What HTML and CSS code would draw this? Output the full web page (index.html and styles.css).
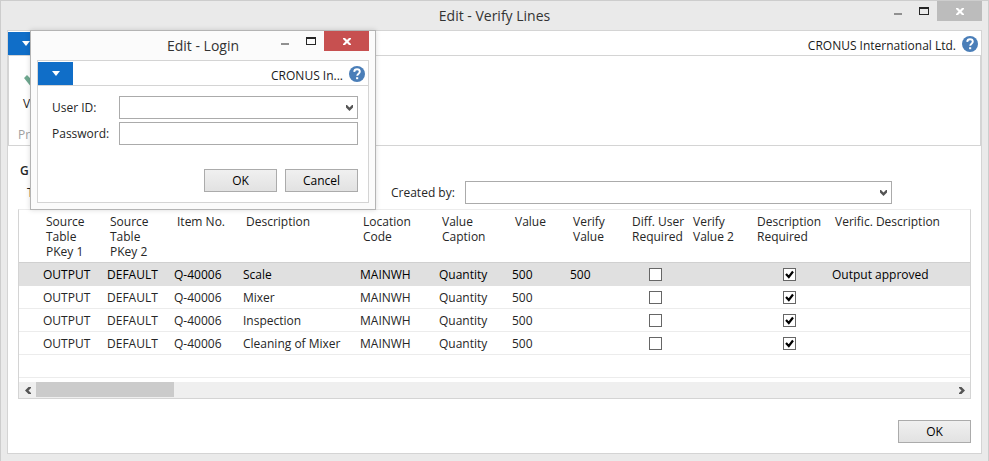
FILE: index.html
```html
<!DOCTYPE html>
<html lang="en">
<head>
<meta charset="utf-8">
<title>Edit - Verify Lines</title>
<link rel="stylesheet" href="styles.css">
</head>
<body>
<svg class="defs" aria-hidden="true">
  <symbol id="i-min" viewBox="0 0 8 2"><path d="M0 0h8v2H0z" fill="currentColor"/></symbol>
  <symbol id="i-max" viewBox="0 0 10 8"><path fill-rule="evenodd" d="M0 0h10v8H0zM1 2v5h8V2z" fill="currentColor"/></symbol>
  <symbol id="i-close" viewBox="0 0 8 7"><path d="M0 0h2l2 2 2-2h2v1L5.500 3.500 8 6v1H6L4 5 2 7H0V6l2.500-2.500L0 1z" fill="currentColor"/></symbol>
  <symbol id="i-help" viewBox="0 0 16 16"><circle cx="8" cy="8" r="8" fill="#4a7eb8"/><path d="M5.200 5.900C5.300 4.100 6.500 3.300 8 3.300s2.800.9 2.800 2.400c0 1.900-2.600 2.100-2.600 4.100" fill="none" stroke="#fff" stroke-width="1.900"/><path d="M7.100 11.200h2.100v2H7.100z" fill="#fff"/></symbol>
  <symbol id="i-down" viewBox="0 0 7 6"><path d="M0 0h1l2.500 2.500L6 0h1v2.500L3.500 6 0 2.500z" fill="currentColor"/></symbol>
  <symbol id="i-left" viewBox="0 0 6 7"><path d="M6 0v1L3.500 3.500 6 6v1H3.500L0 3.500 3.500 0z" fill="currentColor"/></symbol>
  <symbol id="i-right" viewBox="0 0 6 7"><path d="M0 0v1l2.500 2.500L0 6v1h2.500L6 3.500 2.500 0z" fill="currentColor"/></symbol>
  <symbol id="i-tri" viewBox="0 0 8 5"><path d="M0 0h8L4 5z" fill="#fff"/></symbol>
</svg>

<main class="window">
  <header class="titlebar">
    <h1>Edit - Verify Lines</h1>
    <div class="controls">
      <button class="minimize" aria-label="Minimize"><svg width="8" height="2"><use href="#i-min"/></svg></button>
      <button class="maximize" aria-label="Maximize"><svg width="10" height="8"><use href="#i-max"/></svg></button>
      <button class="close" aria-label="Close"><svg width="8" height="7"><use href="#i-close"/></svg></button>
    </div>
  </header>
  <div class="client">
    <div class="appbar">
      <button class="app-tab" aria-label="Application menu"><svg width="8" height="5"><use href="#i-tri"/></svg></button>
      <span class="company">CRONUS International Ltd.</span>
      <a class="help" href="#" aria-label="Help"><svg width="16" height="16"><use href="#i-help"/></svg></a>
    </div>
    <div class="ribbon">
      <button class="action"><svg width="20" height="16" viewBox="0 0 20 16"><path d="M1 5l3-3 5 5 7-7 3 2-10 13z" fill="#6fa890"/></svg>V</button>
      <span class="group">Pr</span>
    </div>
    <section class="general">
      <h2>G</h2>
      <div class="filters">
        <span class="type">T</span>
        <label for="created">Created by:</label>
        <span class="combo"><select id="created"><option></option></select><svg width="7" height="6"><use href="#i-down"/></svg></span>
      </div>
    </section>
    <div class="grid">
      <table>
        <colgroup><col class="w20"><col class="w64"><col class="w67"><col class="w69"><col class="w117"><col class="w79"><col class="w73"><col class="w58"><col class="w59"><col class="w61"><col class="w64"><col class="w78"><col></colgroup>
        <thead><tr><td></td><th>Source<br>Table<br>PKey 1</th><th>Source<br>Table<br>PKey 2</th><th>Item No.</th><th>Description</th><th>Location<br>Code</th><th>Value<br>Caption</th><th>Value</th><th>Verify<br>Value</th><th>Diff. User<br>Required</th><th>Verify<br>Value 2</th><th>Description<br>Required</th><th>Verific. Description</th></tr></thead>
        <tbody>
          <tr class="selected"><td></td><td>OUTPUT</td><td>DEFAULT</td><td>Q-40006</td><td>Scale</td><td>MAINWH</td><td>Quantity</td><td>500</td><td>500</td><td class="check"><input type="checkbox" aria-label="Diff. user required"></td><td></td><td class="check"><input type="checkbox" checked aria-label="Description required"></td><td>Output approved</td></tr>
          <tr><td></td><td>OUTPUT</td><td>DEFAULT</td><td>Q-40006</td><td>Mixer</td><td>MAINWH</td><td>Quantity</td><td>500</td><td></td><td class="check"><input type="checkbox" aria-label="Diff. user required"></td><td></td><td class="check"><input type="checkbox" checked aria-label="Description required"></td><td></td></tr>
          <tr><td></td><td>OUTPUT</td><td>DEFAULT</td><td>Q-40006</td><td>Inspection</td><td>MAINWH</td><td>Quantity</td><td>500</td><td></td><td class="check"><input type="checkbox" aria-label="Diff. user required"></td><td></td><td class="check"><input type="checkbox" checked aria-label="Description required"></td><td></td></tr>
          <tr><td></td><td>OUTPUT</td><td>DEFAULT</td><td>Q-40006</td><td>Cleaning of Mixer</td><td>MAINWH</td><td>Quantity</td><td>500</td><td></td><td class="check"><input type="checkbox" aria-label="Diff. user required"></td><td></td><td class="check"><input type="checkbox" checked aria-label="Description required"></td><td></td></tr>
          <tr><td colspan="13"></td></tr>
        </tbody>
      </table>
      <div class="scroll">
        <button aria-label="Scroll left"><svg width="6" height="7"><use href="#i-left"/></svg></button>
        <div class="track"><div class="thumb"></div></div>
        <button aria-label="Scroll right"><svg width="6" height="7"><use href="#i-right"/></svg></button>
      </div>
    </div>
    <footer class="actions"><button class="push">OK</button></footer>
  </div>
</main>

<form class="dialog" role="dialog" aria-label="Login">
  <header class="titlebar">
    <h2>Edit - Login</h2>
    <div class="controls">
      <button type="button" class="minimize" aria-label="Minimize"><svg width="8" height="2"><use href="#i-min"/></svg></button>
      <button type="button" class="maximize" aria-label="Maximize"><svg width="10" height="8"><use href="#i-max"/></svg></button>
      <button type="button" class="close" aria-label="Close"><svg width="8" height="7"><use href="#i-close"/></svg></button>
    </div>
  </header>
  <div class="pane">
    <div class="appbar">
      <button type="button" class="app-tab" aria-label="Application menu"><svg width="8" height="5"><use href="#i-tri"/></svg></button>
      <span class="company">CRONUS In...</span>
      <a class="help" href="#" aria-label="Help"><svg width="16" height="16"><use href="#i-help"/></svg></a>
    </div>
    <div class="fields">
      <label for="user">User ID:</label>
      <span class="combo"><select id="user"><option></option></select><svg width="7" height="6"><use href="#i-down"/></svg></span>
      <label for="password">Password:</label>
      <input id="password" type="password">
    </div>
    <footer class="actions"><button type="button" class="push">OK</button><button type="button" class="push">Cancel</button></footer>
  </div>
</form>
</body>
</html>
```
FILE: styles.css
```css
* { box-sizing: border-box; }
body { margin: 0; font: 12px/15px "Open Sans", "Noto Sans", sans-serif; color: #262626; }
button, input, select { font: inherit; color: inherit; margin: 0; padding: 0; border: 0; border-radius: 0; background: none; }
h1, h2 { margin: 0; font-weight: 400; }
svg { display: block; }
.defs { position: absolute; width: 0; height: 0; }

.window { display: flex; flex-direction: column; min-height: 100vh; padding: 0 6px 7px; border: 1px solid #cdcdcd; background: #eaeaea; }
.titlebar { display: grid; grid-template-columns: 1fr; height: 29px; }
.titlebar > * { grid-area: 1 / 1; }
.titlebar h1, .titlebar h2 { font-size: 14px; line-height: 29px; text-align: center; color: #333; }
.controls { display: flex; justify-self: end; }
.controls button { display: flex; justify-content: center; height: 20px; }
.minimize { width: 27px; padding-top: 12px; color: #909090; }
.maximize { width: 26px; padding-top: 6px; color: #262626; }
.controls .close { width: 45px; align-items: center; background: #bcbcbc; color: #fff; }

.client { flex: 1; display: flex; flex-direction: column; border: 1px solid #d4d4d4; background: #fff; }
.appbar { display: flex; align-items: center; height: 25px; padding-right: 3px; border-bottom: 1px solid #d4d4d4; }
.app-tab { display: flex; align-items: center; justify-content: center; align-self: flex-end; width: 35px; height: 23px; background: #106ec8; }
.company { margin-left: auto; padding-top: 4px; color: #1a1a1a; }
.help { margin-left: 6px; padding-top: 2px; }
.ribbon { display: flex; flex-direction: column; align-items: flex-start; justify-content: space-between; height: 90px; padding: 17px 9px 3px; border: 1px solid #d4d4d4; border-top: 0; }
.action { display: flex; flex-direction: column; align-items: flex-start; gap: 7px; padding-left: 5px; }
.group { color: #a0a0a0; }

.general { padding: 17px 89px 5px 12px; }
.general h2 { font-size: 12px; line-height: 15px; font-weight: 600; }
.filters { display: flex; align-items: center; margin-top: 3px; }
.type { width: 371px; padding-left: 7px; }
.filters label { width: 74px; }
.filters .combo { flex: 1; }
.combo { display: grid; align-items: center; }
.combo > * { grid-area: 1 / 1; }
.combo svg { justify-self: end; margin-right: 5px; color: #555; pointer-events: none; }
select, .fields input { appearance: none; width: 100%; height: 23px; border: 1px solid #ababab; background: #fff; }

.grid { margin: 0 10px; border: 1px solid #d4d4d4; border-top-color: #ececec; }
table { width: 100%; table-layout: fixed; border-spacing: 0; }
.w20 { width: 20px; }
.w58 { width: 58px; }
.w59 { width: 59px; }
.w61 { width: 61px; }
.w64 { width: 64px; }
.w67 { width: 67px; }
.w69 { width: 69px; }
.w73 { width: 73px; }
.w78 { width: 78px; }
.w79 { width: 79px; }
.w117 { width: 117px; }
th, td { padding: 0 0 0 4px; text-align: left; font-weight: 400; white-space: nowrap; }
thead th, thead td { height: 53px; padding: 4px 0 3px 7px; vertical-align: top; border-bottom: 1px solid #d0d0d0; }
tbody td { height: 23px; border-bottom: 1px solid #ececec; }
.selected td { background: #e0e0e0; border-color: #e0e0e0; color: #000; }
td.check { padding: 0; text-align: center; }
.check input { appearance: none; display: block; width: 13px; height: 13px; margin: 0 auto; border: 1px solid #666; background: #fff; }
.check input:checked { background: #fff url("data:image/svg+xml,%3Csvg xmlns='http://www.w3.org/2000/svg' viewBox='0 0 11 11'%3E%3Cpath d='M2 5l2.800 3L9 2.500' fill='none' stroke='%23000' stroke-width='2.200'/%3E%3C/svg%3E"); }
.scroll { display: flex; align-items: center; height: 16px; margin-top: 4px; background: #efefef; }
.scroll button { display: flex; justify-content: center; width: 17px; color: #555; }
.track { flex: 1; height: 15px; align-self: flex-start; }
.thumb { width: 15%; height: 100%; background: #cbcbcb; }
.actions { display: flex; justify-content: flex-end; gap: 8px; }
.client > .actions { padding: 21px 10px 10px; }
.push { width: 73px; height: 23px; border: 1px solid #ababab; background: linear-gradient(#f0f0f0, #e2e2e2); color: #000; }

.dialog { position: absolute; top: 30px; left: 30px; width: 346px; padding: 0 6px 6px; border: 1px solid #b4b4b4; background: #fbfbfb; box-shadow: 0 0 5px rgba(0, 0, 0, 0.15); }
.dialog .close { background: #c75050; }
.pane { border: 1px solid #d4d4d4; background: #fff; }
.fields { display: grid; grid-template-columns: 67px 1fr; align-items: center; gap: 3px 0; padding: 10px 10px 0 14px; }
.pane > .actions { padding: 24px 10px 10px; }
```
